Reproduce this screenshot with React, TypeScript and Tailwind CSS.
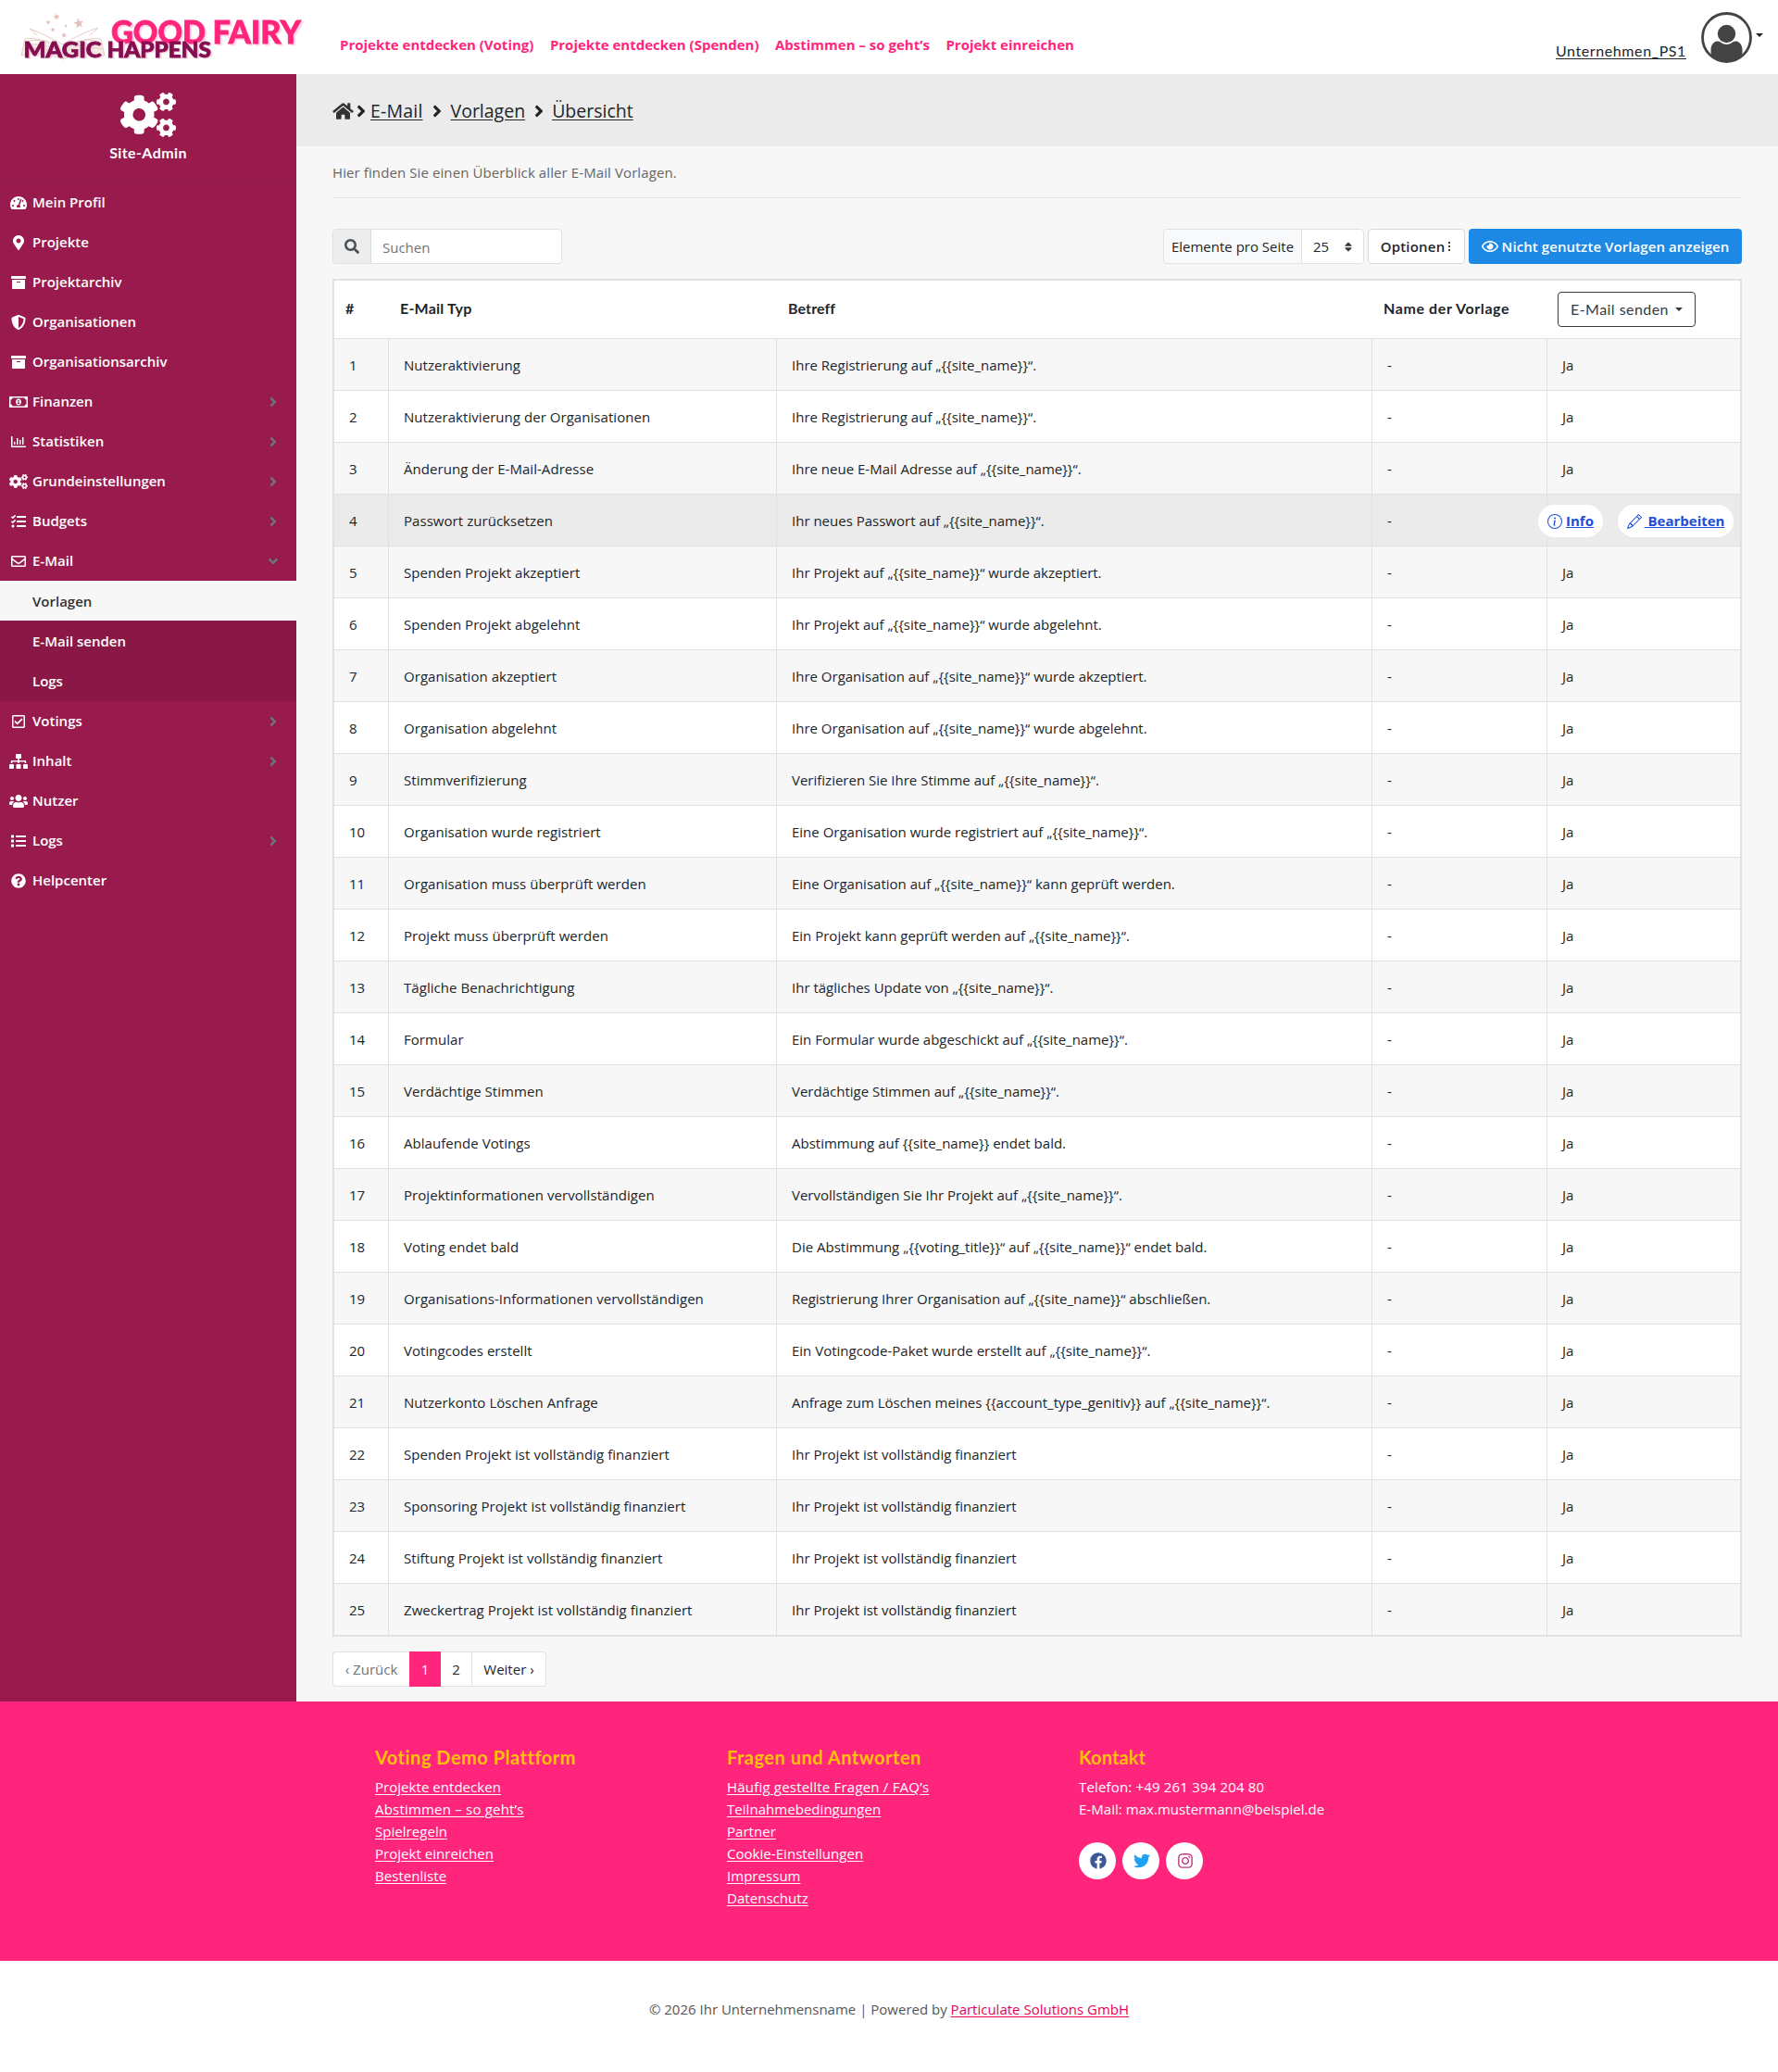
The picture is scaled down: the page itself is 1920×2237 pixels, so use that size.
import React from 'react';
import {
  FaAngleDown,
  FaAngleRight,
  FaArchive,
  FaCogs,
  FaFacebook,
  FaHome,
  FaInstagram,
  FaList,
  FaMapMarkerAlt,
  FaQuestionCircle,
  FaRegChartBar,
  FaRegCheckSquare,
  FaRegEnvelope,
  FaRegEye,
  FaRegMoneyBillAlt,
  FaSearch,
  FaShieldAlt,
  FaSitemap,
  FaSort,
  FaTachometerAlt,
  FaTasks,
  FaTwitter,
  FaUsers,
} from 'react-icons/fa';
import { BsInfoCircle, BsPencil } from 'react-icons/bs';

const navLinks = [
  'Projekte entdecken (Voting)',
  'Projekte entdecken (Spenden)',
  'Abstimmen – so geht’s',
  'Projekt einreichen',
];

const menu = [
  { icon: FaTachometerAlt, label: 'Mein Profil' },
  { icon: FaMapMarkerAlt, label: 'Projekte' },
  { icon: FaArchive, label: 'Projektarchiv' },
  { icon: FaShieldAlt, label: 'Organisationen' },
  { icon: FaArchive, label: 'Organisationsarchiv' },
  { icon: FaRegMoneyBillAlt, label: 'Finanzen', more: true },
  { icon: FaRegChartBar, label: 'Statistiken', more: true },
  { icon: FaCogs, label: 'Grundeinstellungen', more: true },
  { icon: FaTasks, label: 'Budgets', more: true },
  { icon: FaRegEnvelope, label: 'E-Mail', sub: ['Vorlagen', 'E-Mail senden', 'Logs'] },
  { icon: FaRegCheckSquare, label: 'Votings', more: true },
  { icon: FaSitemap, label: 'Inhalt', more: true },
  { icon: FaUsers, label: 'Nutzer' },
  { icon: FaList, label: 'Logs', more: true },
  { icon: FaQuestionCircle, label: 'Helpcenter' },
];

const rows = [
  ['Nutzeraktivierung', 'Ihre Registrierung auf „{{site_name}}“.'],
  ['Nutzeraktivierung der Organisationen', 'Ihre Registrierung auf „{{site_name}}“.'],
  ['Änderung der E-Mail-Adresse', 'Ihre neue E-Mail Adresse auf „{{site_name}}“.'],
  ['Passwort zurücksetzen', 'Ihr neues Passwort auf „{{site_name}}“.'],
  ['Spenden Projekt akzeptiert', 'Ihr Projekt auf „{{site_name}}“ wurde akzeptiert.'],
  ['Spenden Projekt abgelehnt', 'Ihr Projekt auf „{{site_name}}“ wurde abgelehnt.'],
  ['Organisation akzeptiert', 'Ihre Organisation auf „{{site_name}}“ wurde akzeptiert.'],
  ['Organisation abgelehnt', 'Ihre Organisation auf „{{site_name}}“ wurde abgelehnt.'],
  ['Stimmverifizierung', 'Verifizieren Sie Ihre Stimme auf „{{site_name}}“.'],
  ['Organisation wurde registriert', 'Eine Organisation wurde registriert auf „{{site_name}}“.'],
  ['Organisation muss überprüft werden', 'Eine Organisation auf „{{site_name}}“ kann geprüft werden.'],
  ['Projekt muss überprüft werden', 'Ein Projekt kann geprüft werden auf „{{site_name}}“.'],
  ['Tägliche Benachrichtigung', 'Ihr tägliches Update von „{{site_name}}“.'],
  ['Formular', 'Ein Formular wurde abgeschickt auf „{{site_name}}“.'],
  ['Verdächtige Stimmen', 'Verdächtige Stimmen auf „{{site_name}}“.'],
  ['Ablaufende Votings', 'Abstimmung auf {{site_name}} endet bald.'],
  ['Projektinformationen vervollständigen', 'Vervollständigen Sie Ihr Projekt auf „{{site_name}}“.'],
  ['Voting endet bald', 'Die Abstimmung „{{voting_title}}“ auf „{{site_name}}“ endet bald.'],
  ['Organisations-Informationen vervollständigen', 'Registrierung Ihrer Organisation auf „{{site_name}}“ abschließen.'],
  ['Votingcodes erstellt', 'Ein Votingcode-Paket wurde erstellt auf „{{site_name}}“.'],
  ['Nutzerkonto Löschen Anfrage', 'Anfrage zum Löschen meines {{account_type_genitiv}} auf „{{site_name}}“.'],
  ['Spenden Projekt ist vollständig finanziert', 'Ihr Projekt ist vollständig finanziert'],
  ['Sponsoring Projekt ist vollständig finanziert', 'Ihr Projekt ist vollständig finanziert'],
  ['Stiftung Projekt ist vollständig finanziert', 'Ihr Projekt ist vollständig finanziert'],
  ['Zweckertrag Projekt ist vollständig finanziert', 'Ihr Projekt ist vollständig finanziert'],
];

const Star = ({ x, y, s }: { x: number; y: number; s: number }) => (
  <path
    transform={`translate(${x} ${y}) rotate(-10) scale(${s})`}
    d="M0-5 1.4-1.6 5-1.4 2.2 1 3.1 4.6 0 2.6-3.1 4.6-2.2 1-5-1.4-1.4-1.6Z"
    fill="#e5bfbc"
  />
);

const Logo = () => (
  <svg width="320" height="70" viewBox="20 5 320 70" className="shrink-0 overflow-visible">
    <path d="M26 48c16-3 30 0 42 12 12-12 26-15 42-12l3 12c-16-3-30-1-45 4-15-5-29-7-45-4Z" fill="#f8ebe6" />
    <g fill="none" stroke="#e8cbc4" strokeWidth="1">
      <path d="M68 62C58 46 42 40 27 42l-4 18c16-3 30-2 45 4 14-6 28-7 45-4l-4-18C93 40 77 46 68 62Z" />
      <path d="M68 60C62 46 48 40 29 45M68 60C62 52 46 45 27 49M68 60c6-14 20-20 39-15M68 60c6-8 22-15 41-11" />
      <path d="M68 48C56 42 44 35 32 31l8 7M68 48c12-8 26-14 38-18l-9 8M26 53c16-3 30 0 42 9 12-9 26-12 42-9" />
    </g>
    <Star x={61} y={18} s={0.7} />
    <Star x={52} y={24} s={0.5} />
    <Star x={85} y={25} s={1.05} />
    <Star x={57} y={32} s={0.5} />
    <Star x={71} y={28} s={0.35} />
    <Star x={69} y={38} s={0.6} />
    <g fontFamily="Lato, sans-serif" fontWeight="900" strokeWidth="0.8">
      <g fontSize="34" fill="#ff257d" stroke="#ff257d" className="drop-shadow-[2px_2px_0_#ffd9e6]">
        <text x="120" y="46.500" textLength="102" lengthAdjust="spacingAndGlyphs">GOOD</text>
        <text x="229.500" y="46.500" textLength="95.500" lengthAdjust="spacingAndGlyphs">FAIRY</text>
      </g>
      <g fontSize="23" fill="#850d50" stroke="#850d50" className="drop-shadow-[2px_1px_0_#f0d5e0]">
        <text x="25.500" y="62" textLength="84" lengthAdjust="spacingAndGlyphs">MAGIC</text>
        <text x="115.500" y="62" textLength="112.500" lengthAdjust="spacingAndGlyphs">HAPPENS</text>
      </g>
    </g>
  </svg>
);

const Avatar = () => (
  <svg width="55" height="55" viewBox="0 0 55 55">
    <clipPath id="avatar-clip">
      <circle cx="27.500" cy="27.500" r="26" />
    </clipPath>
    <g clipPath="url(#avatar-clip)" fill="#444">
      <circle cx="27.500" cy="23.500" r="9.700" />
      <path d="M10.500 46V41c0-5 2.500-9 7-9.500 2.500 0 3.500 1 4.500 1.800 3.500 2.300 7.500 2.300 11 0 1-.8 2-1.800 4.500-1.800 4.500.5 7 4.500 7 9.500v5L36 55H19Z" />
    </g>
    <circle cx="27.500" cy="27.500" r="26" fill="none" stroke="#444" strokeWidth="2.800" />
  </svg>
);

const Header = () => (
  <header className="h-20 bg-white flex items-center pl-5 pr-4">
    <Logo />
    <nav className="flex gap-[17.5px] pl-[27px] pt-4 text-[#ff257d] font-bold text-[15px]">
      {navLinks.map((label) => (
        <a key={label} href="#">{label}</a>
      ))}
    </nav>
    <div className="ml-auto flex items-center">
      <a href="#" className="font-['Lato'] text-[16px] tracking-[0.6px] text-[#212529] underline underline-offset-2 pt-[30px] mr-4">
        Unternehmen_PS1
      </a>
      <Avatar />
      <span className="ml-1 mb-1 border-x-4 border-x-transparent border-t-4 border-t-[#212529]" />
    </div>
  </header>
);

const Sidebar = () => (
  <aside className="w-80 shrink-0 bg-[#991b4e] text-white">
    <div className="h-[117px] flex flex-col items-center border-b-2 border-[#931a4b] pt-5">
      <FaCogs className="h-12 w-[60px]" />
      <span className="font-['Lato'] font-bold text-[16px] tracking-[0.4px] leading-6 mt-[5px]">Site-Admin</span>
    </div>
    <nav className="font-semibold text-[15px]">
      {menu.map(({ icon: Icon, label, more, sub }, i) => (
        <div key={i}>
          <a href="#" className="flex items-center h-[43px] pl-[10px] pr-5">
            <Icon className="h-4 w-5 mr-[5px]" />
            {label}
            {more && <FaAngleRight className="ml-auto h-4 w-2.5 text-[#6c757d]" />}
            {sub && <FaAngleDown className="ml-auto h-4 w-2.5 text-[#6c757d]" />}
          </a>
          {sub && (
            <div className="h-[130px] bg-[#8a1846]">
              {sub.map((item, n) => (
                <a
                  key={item}
                  href="#"
                  className={
                    n === 0
                      ? 'flex items-center h-[43px] pt-0.5 pl-[35px] bg-[#f7f7f7] text-[#333]'
                      : 'flex items-center h-[43px] pt-0.5 pl-[35px]'
                  }
                >
                  {item}
                </a>
              ))}
            </div>
          )}
        </div>
      ))}
    </nav>
  </aside>
);

const Breadcrumb = () => (
  <div className="h-[78px] bg-[#ebebeb] pl-[39px] pt-0.5 flex items-center text-[19.5px] font-medium text-[#212529]">
    <FaHome className="h-5 w-[23px] text-[#333]" />
    <FaAngleRight className="h-5 w-2.5 ml-[3px] mr-[5px]" />
    <a href="#" className="underline underline-offset-2 tracking-[0.2px]">E-Mail</a>
    <FaAngleRight className="h-5 w-2.5 ml-[10px] mr-[10px]" />
    <a href="#" className="underline underline-offset-2">Vorlagen</a>
    <FaAngleRight className="h-5 w-2.5 ml-[10px] mr-[9px]" />
    <a href="#" className="underline underline-offset-2">Übersicht</a>
  </div>
);

const Toolbar = () => (
  <div className="flex items-center h-[38px] mt-[33px]">
    <div className="flex w-[248px] h-full border border-[#dfe0e2] rounded overflow-hidden bg-white">
      <div className="w-[41px] bg-[#ededed] border-r border-[#d8dadd] flex items-center justify-center text-[#495057]">
        <FaSearch className="size-4" />
      </div>
      <input className="flex-1 min-w-0 px-3 pt-0.5 text-[15px] placeholder:text-[#6c757d] outline-none" placeholder="Suchen" />
    </div>
    <div className="ml-auto flex h-full">
      <div className="w-[217px] flex border border-[#dee2e6] rounded overflow-hidden mr-1 text-[#212529]">
        <span className="w-[149px] bg-[#f8f9fa] flex items-center justify-center border-r border-[#dee2e6]">Elemente pro Seite</span>
        <span className="flex-1 bg-white flex items-center justify-between px-3">
          25
          <FaSort className="h-[13px] w-2 text-[#343a40]" />
        </span>
      </div>
      <button className="w-[105px] bg-white border border-[#d5dade] rounded font-semibold tracking-[0.2px] text-[#212529] flex items-center justify-center pr-0.5 mr-1">
        Optionen
        <span className="ml-1 flex flex-col gap-[2px]">
          <i className="size-[2px] bg-[#444]" />
          <i className="size-[2px] bg-[#444]" />
          <i className="size-[2px] bg-[#444]" />
        </span>
      </button>
      <button className="w-[295px] bg-[#1e88e5] text-white rounded font-semibold tracking-[0.08px] flex items-center justify-center gap-1">
        <FaRegEye className="h-4 w-[18px]" />
        Nicht genutzte Vorlagen anzeigen
      </button>
    </div>
  </div>
);

const TemplateTable = () => (
  <table className="mt-4 w-full table-fixed border-separate border-spacing-0 border-2 border-[#dee2e6] bg-white text-left text-[#212529]">
    <colgroup>
      <col className="w-[59px]" />
      <col className="w-[419px]" />
      <col className="w-[643px]" />
      <col className="w-[189px]" />
      <col />
    </colgroup>
    <thead>
      <tr className="h-[63px] font-['Lato'] font-bold text-[16px]">
        <td className="border-b border-[#dee2e6] pl-3 pb-0.5">#</td>
        <td className="border-b border-[#dee2e6] pl-3 pb-0.5 tracking-[0.2px]">E-Mail Typ</td>
        <td className="border-b border-[#dee2e6] pl-3 pb-0.5 tracking-[0.1px]">Betreff</td>
        <td className="border-b border-[#dee2e6] pl-3 pb-0.5 tracking-[0.6px]">Name der Vorlage</td>
        <td className="border-b border-[#dee2e6] pl-[11px]">
          <button className="w-[149px] h-[38px] border border-[#343a40] rounded font-normal tracking-[0.45px] text-[#343a40] flex items-center justify-center">
            E-Mail senden
            <span className="ml-[7px] border-x-4 border-x-transparent border-t-4 border-t-[#343a40]" />
          </button>
        </td>
      </tr>
    </thead>
    <tbody>
      {rows.map(([type, subject], i) => {
        const active = i === 3;
        const last = i === rows.length - 1;
        const cell = last
          ? 'h-[55px] pt-0.5 pl-4 border-r border-[#dee2e6]'
          : 'h-14 pt-0.5 pl-4 border-r border-b border-[#dee2e6]';
        return (
          <tr key={type} className={active ? 'bg-[#ebebeb]' : i % 2 ? 'bg-white' : 'bg-[#f7f7f7]'}>
            <td className={cell}>{i + 1}</td>
            <td className={`${cell} tracking-[0.05px]`}>{type}</td>
            <td className={cell}>{subject}</td>
            <td className={cell}>-</td>
            <td className={last ? 'pt-0.5 pl-4' : 'pt-0.5 pl-4 border-b border-[#dee2e6]'}>
              {active ? (
                <div className="flex -ml-[26px] gap-4 font-bold text-[#1d4ed8]">
                  <a href="#" className="w-[70px] h-[35px] rounded-full bg-white flex items-center justify-center gap-1">
                    <BsInfoCircle className="size-4" />
                    <span className="underline">Info</span>
                  </a>
                  <a href="#" className="w-[125px] h-[35px] rounded-full bg-white flex items-center justify-center gap-[3px]">
                    <BsPencil className="size-4" />
                    <span className="underline whitespace-pre"> Bearbeiten</span>
                  </a>
                </div>
              ) : (
                'Ja'
              )}
            </td>
          </tr>
        );
      })}
    </tbody>
  </table>
);

const Pagination = () => (
  <div className="mt-4 flex h-[38px] w-[231px] text-[#212529]">
    <span className="w-[83px] bg-white border border-r-0 border-[#dee2e6] rounded-l flex items-center justify-center text-[#6c757d]">‹ Zurück</span>
    <span className="w-[34px] bg-[#ff257d] text-white flex items-center justify-center">1</span>
    <span className="w-[34px] bg-white border border-l-0 border-[#dee2e6] flex items-center justify-center">2</span>
    <span className="flex-1 bg-white border border-l-0 border-[#dee2e6] rounded-r flex items-center justify-center">Weiter ›</span>
  </div>
);

const footerColumns = [
  {
    title: 'Voting Demo Plattform',
    links: ['Projekte entdecken', 'Abstimmen – so geht’s', 'Spielregeln', 'Projekt einreichen', 'Bestenliste'],
  },
  {
    title: 'Fragen und Antworten',
    links: ['Häufig gestellte Fragen / FAQ’s', 'Teilnahmebedingungen', 'Partner', 'Cookie-Einstellungen', 'Impressum', 'Datenschutz'],
  },
];

const Footer = () => (
  <footer>
    <div className="h-[280px] bg-[#ff257d] text-white flex pl-[405px] pt-12 leading-6 tracking-[0.04px]">
      {footerColumns.map(({ title, links }) => (
        <div key={title} className="w-[380px]">
          <h5 className="font-['Lato'] font-bold text-[20px] tracking-[0.5px] text-[#ffc107] mb-2">{title}</h5>
          <ul>
            {links.map((link) => (
              <li key={link} className={link.includes('’') ? 'tracking-[0.2px]' : undefined}>
                <a href="#" className="underline underline-offset-2">{link}</a>
              </li>
            ))}
          </ul>
        </div>
      ))}
      <div>
        <h5 className="font-['Lato'] font-bold text-[20px] tracking-[0.1px] text-[#ffc107] mb-2">Kontakt</h5>
        <p className="tracking-[0.17px]">Telefon: +49 261 394 204 80</p>
        <p>E-Mail: max.mustermann@beispiel.de</p>
        <div className="flex gap-[7px] mt-6">
          <a href="#" className="size-10 pl-0.5 rounded-full bg-white flex items-center justify-center text-[#3b5998]">
            <FaFacebook className="size-[18px]" />
          </a>
          <a href="#" className="size-10 pl-0.5 rounded-full bg-white flex items-center justify-center text-[#1da1f2]">
            <FaTwitter className="size-[18px]" />
          </a>
          <a href="#" className="size-10 pl-0.5 rounded-full bg-white flex items-center justify-center text-[#c13584]">
            <FaInstagram className="size-[18px]" />
          </a>
        </div>
      </div>
    </div>
    <div className="h-[120px] bg-white flex items-center justify-center pb-4 text-[#555]">
      <p>
        © 2026 Ihr Unternehmensname | Powered by{' '}
        <a href="#" className="text-[#e6005c] underline underline-offset-2">Particulate Solutions GmbH</a>
      </p>
    </div>
  </footer>
);

export default function App() {
  return (
    <div className="w-[1920px] h-[2237px] overflow-hidden bg-white font-['Open_Sans',sans-serif] text-[15px]">
      <Header />
      <div className="flex h-[1757px]">
        <Sidebar />
        <main className="flex-1 bg-[#f7f7f7]">
          <Breadcrumb />
          <div className="px-[39px]">
            <p className="h-[56px] pt-[17px] border-b border-[#e3e3e3] text-[#666] tracking-[0.1px]">
              Hier finden Sie einen Überblick aller E-Mail Vorlagen.
            </p>
            <Toolbar />
            <TemplateTable />
            <Pagination />
          </div>
        </main>
      </div>
      <Footer />
    </div>
  );
}
